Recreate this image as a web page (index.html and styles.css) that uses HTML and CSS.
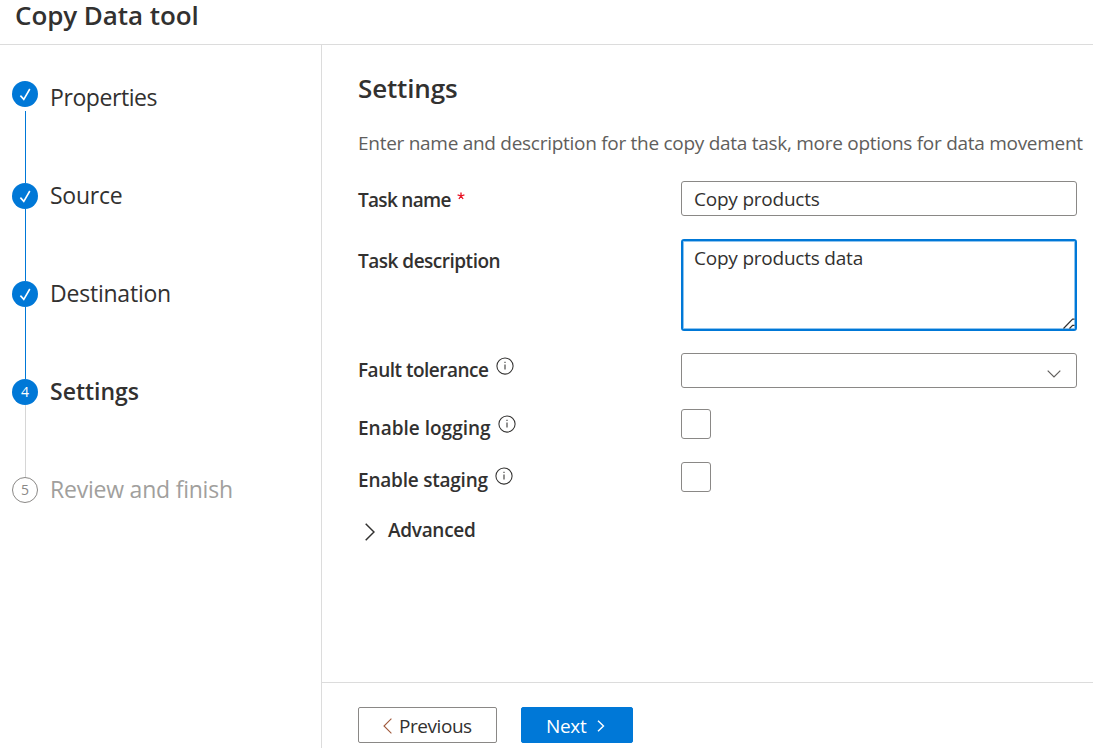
FILE: index.html
```html
<!DOCTYPE html>
<html lang="en">
<head>
<meta charset="utf-8">
<title>Copy Data tool</title>
<link rel="stylesheet" href="styles.css">
</head>
<body>
<header class="topbar"><h1 class="title t-title">Copy Data tool</h1></header>
<div class="layout">
  <nav class="steps">
    <div class="step first"><span class="dot"><svg class="check" viewBox="0 0 26 26"><path d="M8.4 14.6l3.4 3.8L17.8 8"/></svg></span><span class="name t-prop">Properties</span></div>
    <div class="line gap"></div>
    <div class="step"><span class="dot"><svg class="check" viewBox="0 0 26 26"><path d="M8.4 14.6l3.4 3.8L17.8 8"/></svg></span><span class="name t-src">Source</span></div>
    <div class="line"></div>
    <div class="step"><span class="dot"><svg class="check" viewBox="0 0 26 26"><path d="M8.4 14.6l3.4 3.8L17.8 8"/></svg></span><span class="name t-dest">Destination</span></div>
    <div class="line"></div>
    <div class="step current"><span class="dot">4</span><span class="name t-set">Settings</span></div>
    <div class="line pale"></div>
    <div class="step pending"><span class="dot">5</span><span class="name t-rev">Review and finish</span></div>
  </nav>
  <main class="panel">
    <section class="content">
      <h2 class="heading"><span class="t-head">Settings</span></h2>
      <p class="intro"><span class="t-intro">Enter name and description for the copy data task, more options for data movement</span></p>
      <div class="row row-name">
        <label class="label"><span class="t-name">Task name</span><svg class="star" viewBox="0 0 8 8"><path d="M4 4V.4M4 4L.6 2.9M4 4l3.4-1.1M4 4L1.9 7M4 4l2.1 3"/></svg></label>
        <div class="field"><span class="t-val">Copy products</span></div>
      </div>
      <div class="row row-desc">
        <label class="label"><span class="t-desc">Task description</span></label>
        <div class="field area"><span class="t-val">Copy products data</span><svg class="grip" viewBox="0 0 12 12"><path d="M.5 11.5L9.6 2.2H11.5M6.5 11.5L9.6 8.3H11.5"/></svg></div>
      </div>
      <div class="row row-fault">
        <label class="label"><span class="t-fault">Fault tolerance</span><svg class="info" viewBox="0 0 18 18"><circle cx="9" cy="9" r="8.1"/><path d="M9 7.4v5.2M9 4.7v1.4"/></svg></label>
        <div class="field select"><svg class="chevron" viewBox="0 0 14 8"><path d="M.7.7L7 7 13.3.7"/></svg></div>
      </div>
      <div class="row row-log">
        <label class="label"><span class="t-log">Enable logging</span><svg class="info" viewBox="0 0 18 18"><circle cx="9" cy="9" r="8.1"/><path d="M9 7.4v5.2M9 4.7v1.4"/></svg></label>
        <div class="box"></div>
      </div>
      <div class="row row-stage">
        <label class="label"><span class="t-stage">Enable staging</span><svg class="info" viewBox="0 0 18 18"><circle cx="9" cy="9" r="8.1"/><path d="M9 7.4v5.2M9 4.7v1.4"/></svg></label>
        <div class="box"></div>
      </div>
      <div class="advanced"><svg class="expand" viewBox="0 0 10 18"><path d="M.7.8L9 9 .7 17.2"/></svg><span class="t-adv">Advanced</span></div>
    </section>
    <footer class="footer">
      <div class="button"><svg class="prev" viewBox="0 0 9 16"><path d="M8.4.7L1 8l7.4 7.3"/></svg><span class="t-prev">Previous</span></div>
      <div class="button primary"><span class="t-next">Next</span><svg class="next" viewBox="0 0 8 12"><path d="M1 .7L6.5 6 1 11.3"/></svg></div>
    </footer>
  </main>
</div>
</body>
</html>
```
FILE: styles.css
```css
* { box-sizing: border-box; }
body { margin: 0; width: 1093px; height: 748px; overflow: hidden; background: #fff; color: #323130; font: 19px/28px "Open Sans", "Noto Sans", sans-serif; display: flex; flex-direction: column; }
h1, h2, p { margin: 0; white-space: nowrap; }
svg { display: block; flex: none; fill: none; stroke: #323130; stroke-width: 1.2; }
.topbar { height: 45px; flex: none; border-bottom: 1px solid #dcdcdc; padding-left: 15px; }
.title { font-size: 26px; line-height: 30px; font-weight: 600; }
.layout { flex: 1; display: flex; min-height: 0; }
.steps { width: 322px; flex: none; border-right: 1px solid #dcdcdc; padding: 36px 0 0 12px; }
.step { height: 26px; display: flex; align-items: center; gap: 12px; font-size: 23px; white-space: nowrap; }
.step .name { padding-bottom: 2px; }
.step.first .name { padding: 6px 0 0; }
.dot { width: 26px; height: 26px; border-radius: 50%; background: #0078d7; color: #fff; display: flex; align-items: center; justify-content: center; font-size: 14px; flex: none; }
.check { width: 26px; height: 26px; stroke: #fff; stroke-width: 1.6; }
.line { width: 1px; height: 72px; margin-left: 13px; background: #0078d7; }
.line.gap { margin-top: 4px; }
.line.pale { background: #d6d6d6; }
.current { font-weight: 600; }
.current .dot { font-weight: 400; }
.pending { color: #a19f9d; }
.pending .dot { background: #fff; border: 1px solid #8a8886; color: #8a8886; }
.panel { flex: 1; min-width: 0; display: flex; flex-direction: column; }
.content { flex: 1; padding: 28px 0 0 36px; }
.heading { font-size: 26px; line-height: 30px; font-weight: 600; }
.intro { color: #605e5c; margin-top: 26px; }
.row { display: grid; grid-template-columns: 323px 396px; align-items: start; }
.label { display: flex; align-items: flex-start; font-weight: 600; white-space: nowrap; }
.row-name { margin-top: 24px; }
.row-name .label { padding-top: 5px; }
.row-desc { margin-top: 23px; }
.row-desc .label { padding-top: 8px; }
.row-fault { margin-top: 22px; }
.row-fault .label { padding-top: 3px; }
.row-log { margin-top: 21px; }
.row-log .label { padding-top: 5px; }
.row-stage { margin-top: 20px; }
.row-stage .label { padding-top: 4px; }
.field { height: 35px; border: 1px solid #8a8886; border-radius: 3px; padding: 3px 12px; white-space: nowrap; }
.area { height: 92px; border: 2px solid #0078d7; box-shadow: inset 0 0 0 1px #8fc4ef; padding: 3px 0 0 11px; display: flex; justify-content: space-between; }
.grip { width: 12px; height: 12px; align-self: flex-end; }
.select { display: flex; justify-content: flex-end; padding: 16px 15px 0 0; }
.chevron { width: 14px; height: 8px; stroke: #605e5c; }
.box { width: 30px; height: 30px; border: 1px solid #8a8886; border-radius: 3px; }
.star { width: 8px; height: 8px; margin: 6px 0 0 6px; stroke: #e81123; stroke-width: 1.3; }
.info { width: 18px; height: 18px; margin: 1.4px 0 0 7px; stroke-width: 1.05; }
.advanced { display: flex; align-items: center; margin-top: 22px; padding-left: 7px; gap: 13px; font-weight: 600; }
.expand { width: 10px; height: 18px; margin-top: 4px; stroke-width: 1.5; }
.footer { height: 66px; flex: none; border-top: 1px solid #dcdcdc; padding: 24px 0 0 36px; display: flex; gap: 24px; }
.button { width: 139px; height: 36px; border: 1px solid #8a8886; border-radius: 2px; display: flex; align-items: center; padding-left: 24px; gap: 7px; white-space: nowrap; }
.button span { padding-top: 2px; }
.prev { width: 9px; height: 16px; margin-top: 1px; stroke: #a0593c; stroke-width: 1.1; }
.primary { width: 112px; background: #0078d7; border-color: #0078d7; color: #fff; gap: 10px; }
.next { width: 8px; height: 12px; margin-top: 1px; stroke: #fff; stroke-width: 1.4; }

/* Tracking */
.t-title { letter-spacing: -.07px; }
.t-head { letter-spacing: -.15px; }
.t-prop { letter-spacing: -.42px; }
.t-src { letter-spacing: -.25px; }
.t-dest, .t-rev { letter-spacing: -.22px; }
.t-intro { letter-spacing: -.28px; }
.t-val { letter-spacing: -.22px; }
.t-name { letter-spacing: -.7px; }
.t-desc { letter-spacing: -.5px; }
.t-fault { letter-spacing: -.5px; }
.t-stage { letter-spacing: -.22px; }
.t-adv { letter-spacing: -.3px; }
.t-prev { letter-spacing: -.45px; }
.t-next { letter-spacing: -.3px; }
```
